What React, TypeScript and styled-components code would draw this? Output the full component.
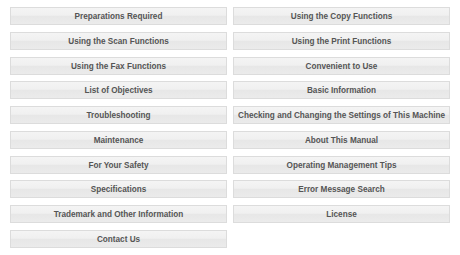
import React from 'react';
import styled, { createGlobalStyle } from 'styled-components';

const GlobalStyle = createGlobalStyle`
  body {
    margin: 0;
    background: #ffffff;
    font-family: "Liberation Sans", Arial, sans-serif;
  }
`;

const items = [
  'Preparations Required',
  'Using the Copy Functions',
  'Using the Scan Functions',
  'Using the Print Functions',
  'Using the Fax Functions',
  'Convenient to Use',
  'List of Objectives',
  'Basic Information',
  'Troubleshooting',
  'Checking and Changing the Settings of This Machine',
  'Maintenance',
  'About This Manual',
  'For Your Safety',
  'Operating Management Tips',
  'Specifications',
  'Error Message Search',
  'Trademark and Other Information',
  'License',
  'Contact Us',
];

function App() {
  return (
    <>
      <GlobalStyle />
      <Menu>
        {items.map((label) => (
          <MenuButton key={label}>{label}</MenuButton>
        ))}
      </Menu>
    </>
  );
}

const Menu = styled.div`
  display: grid;
  grid-template-columns: 217px 217px;
  grid-auto-rows: 18px;
  column-gap: 6px;
  row-gap: 6.75px;
  padding: 7px 0 0 10px;
`;

const MenuButton = styled.div`
  box-sizing: border-box;
  display: flex;
  align-items: center;
  justify-content: center;
  padding-top: 1px;
  border: 1px solid #dcdcdc;
  background: linear-gradient(to bottom, #f4f4f4 0%, #f0f0f0 45%, #e7e7e7 52%, #ebebeb 100%);
  color: #555555;
  font-size: 8.2px;
  font-weight: bold;
  white-space: nowrap;
`;

export default App;
